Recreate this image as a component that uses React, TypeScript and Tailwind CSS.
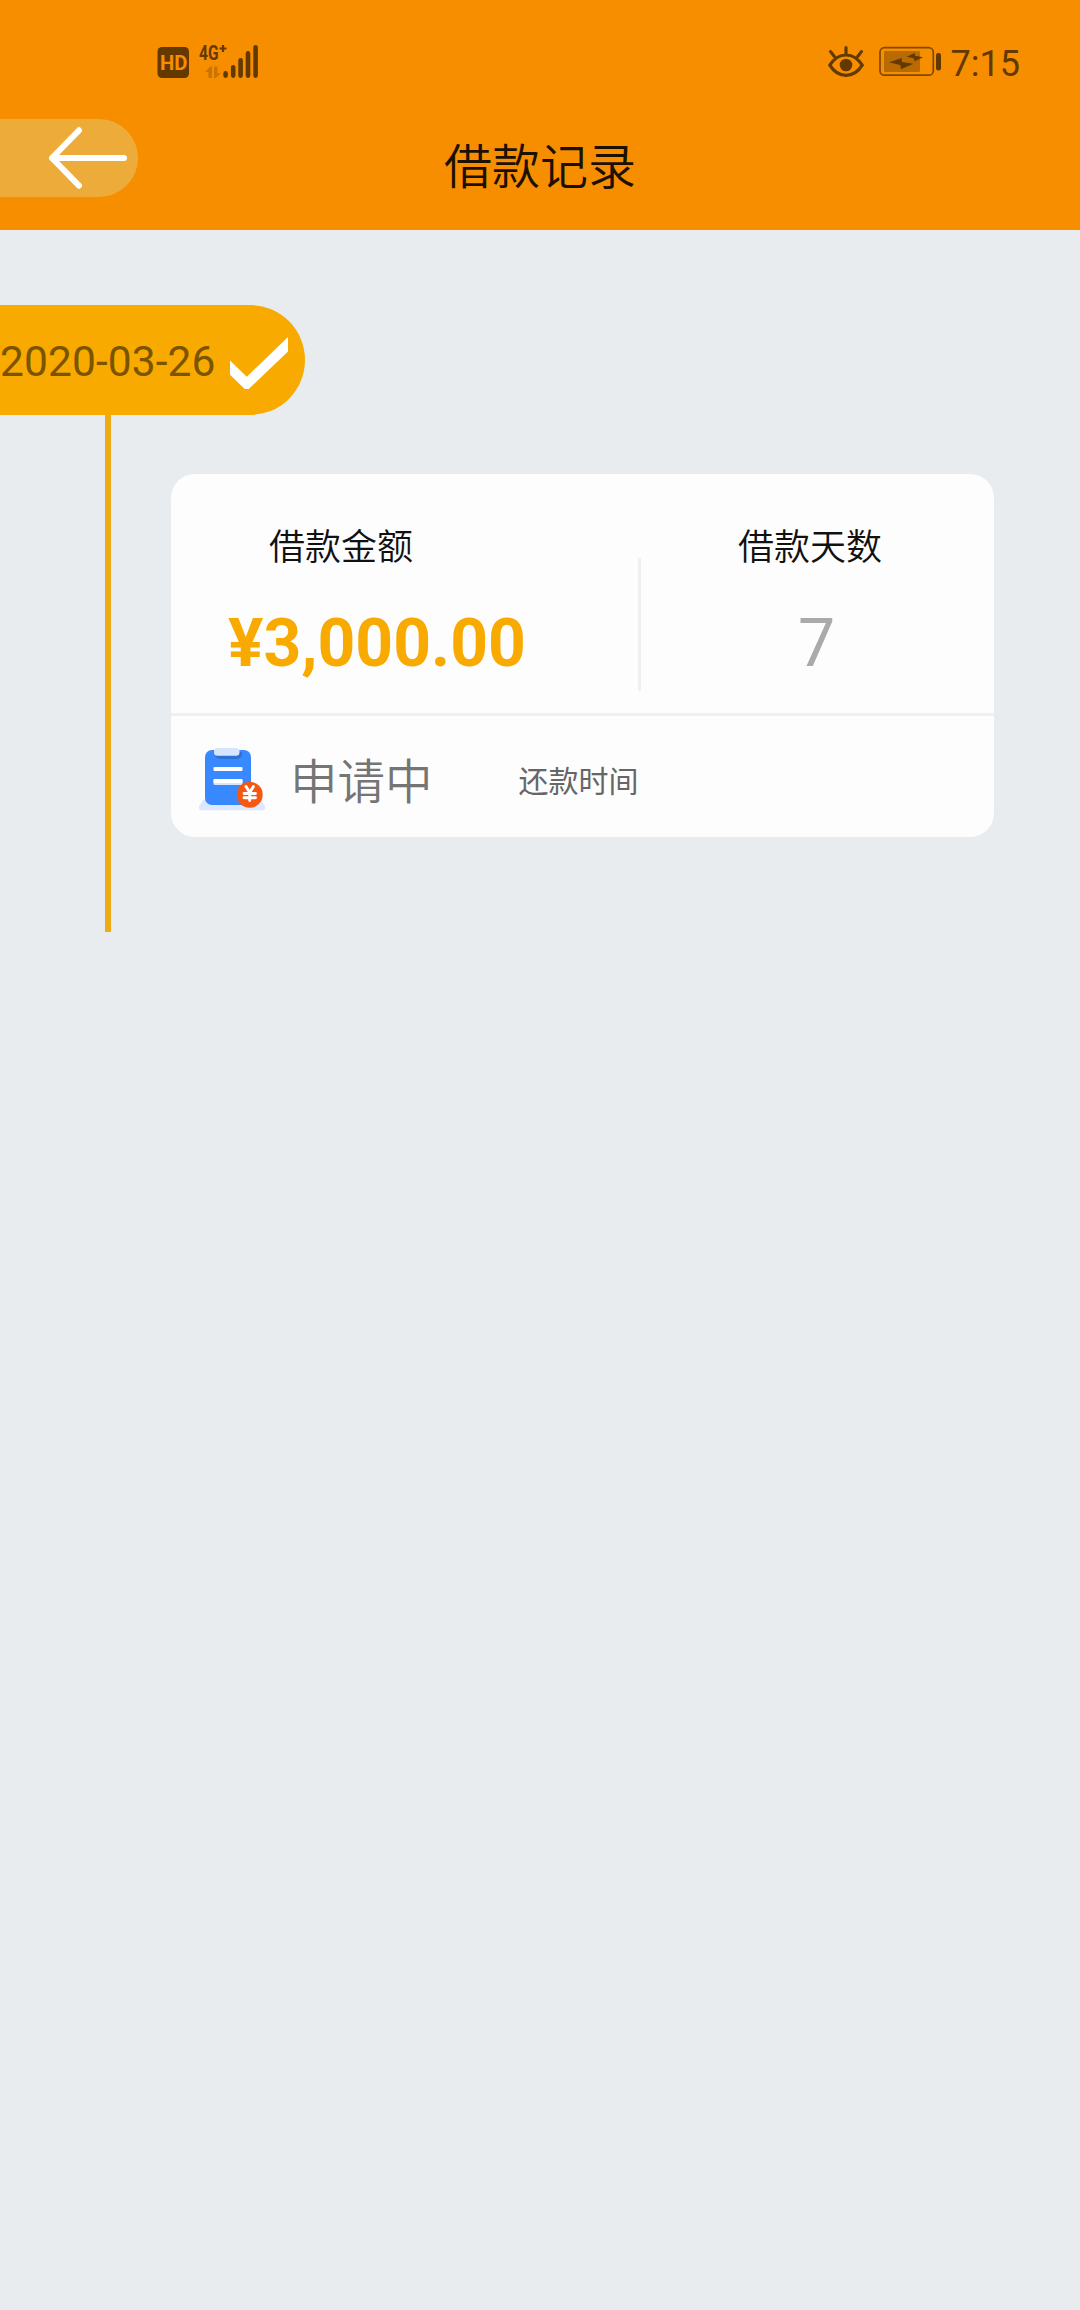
/**
 * Loan history screen: status bar, header and a timeline of loan requests.
 */

interface LoanRecord {
  date: string;
  amount: string;
  days: number;
  status: string;
}

const RECORDS: LoanRecord[] = [
  { date: '2020-03-26', amount: '¥3,000.00', days: 7, status: '申请中' },
];

function SignalIcons() {
  return (
    <svg width="110" height="40" viewBox="152 42 110 40" fill="#633900">
      <rect x="157.5" y="47" width="31.5" height="31" rx="4.5" />
      <text
        x="160"
        y="70"
        fill="#f78e00"
        className="font-['Roboto'] text-[20px] font-bold"
        textLength="27.5"
        lengthAdjust="spacingAndGlyphs"
      >
        HD
      </text>
      <text
        x="199"
        y="59.5"
        className="font-['Roboto'] text-[20.5px] font-bold"
        textLength="19.5"
        lengthAdjust="spacingAndGlyphs"
      >
        4G
      </text>
      <path d="M219.5 48.5h7M223 45v7" stroke="#633900" strokeWidth="2.2" />
      {/* data up / down arrows */}
      <g fill="#c97400">
        <path d="M205 72l5.3-5.5h1.7V78h-3.6v-6z" />
        <path d="M214 66.500h3.400V73h3.600l-5.400 5H214z" />
      </g>
      <path
        d="M225.6 73.4v2.2M233.2 67.2v8.4M240.6 60.2v15.4M248 53.2v22.4M255.6 47.2v28.4"
        stroke="#633900"
        strokeWidth="4.6"
        strokeLinecap="round"
      />
    </svg>
  );
}

function EyeIcon() {
  return (
    <svg width="38" height="34" viewBox="827 45 38 34" fill="none" stroke="#633900" strokeWidth="3.2" strokeLinecap="round">
      <path d="M829.8 65.2C834 58.6 839.6 55 846 55s12 3.6 16.2 10.2C858 72 852.4 75.4 846 75.4s-12-3.4-16.2-10.2z" />
      <path d="M846 47.7v6M830.600 51.6l3.8 5M861.400 51.6l-3.8 5" />
      <circle cx="846" cy="65" r="6.3" fill="#633900" stroke="none" />
    </svg>
  );
}

function BatteryIcon() {
  return (
    <svg width="64" height="34" viewBox="878 45 64 34" fill="#633900">
      <rect x="880" y="47.7" width="53.3" height="27.5" rx="4.5" fill="none" stroke="#7f4900" strokeWidth="1.7" />
      <rect x="884" y="51" width="36" height="21" rx="1" fill="#b96a00" />
      <rect x="936" y="53" width="5" height="17.5" rx="2.2" />
      <path d="M889 62.3l12.700-4.300.3 4 11.300 1.700-12.300 5.600-.7-4.300z" />
      <path d="M906.700 56.700l8-3.700.3 2.700 8 1.600-8.300 4-1-3z" />
    </svg>
  );
}

function BackArrow() {
  return (
    <svg width="80" height="64" viewBox="48 126 80 64" fill="none" stroke="#fff" strokeWidth="6" strokeLinecap="round" strokeLinejoin="round">
      <path d="M79 130.300L52 158l27 27.700M52 158h72" />
    </svg>
  );
}

function CheckMark() {
  return (
    <svg width="58" height="52" viewBox="230 337 58 52" fill="#fff">
      <path d="M230 360.500l16.800 16.200L288 337v14.500L248.800 389h-4L230 374.700z" />
    </svg>
  );
}

function ClipboardIcon() {
  return (
    <svg width="66" height="64" viewBox="199 747 66 64">
      <path d="M204 799h56l4.500 6.500c1.500 2.500.5 4.800-2.500 4.800h-60c-3 0-3.800-2.300-2.500-4.800z" fill="#dbe8fd" />
      <rect x="205" y="750" width="46" height="55" rx="7" fill="#3888ff" />
      <path d="M215 752h27v2a5 5 0 0 1-5 5h-17a5 5 0 0 1-5-5z" fill="#2f6fd6" />
      <rect x="214" y="748" width="25.500" height="7.700" rx="3.500" fill="#d5e5fd" />
      <rect x="213.500" y="767" width="29" height="4" rx="1" fill="#fff" />
      <rect x="213.500" y="779" width="29" height="6" rx="1.500" fill="#d5e5fd" />
      <rect x="213.500" y="779" width="29" height="4" rx="1" fill="#fff" />
      <circle cx="249.700" cy="794.800" r="13" fill="#f65812" />
      <path
        d="M246 786.500l3.700 6 3.700-6M244 793.500h11.500M244 797.800h11.500M249.700 793v7.500"
        fill="none"
        stroke="#fff"
        strokeWidth="2.900"
        strokeLinecap="round"
      />
    </svg>
  );
}

function Header() {
  return (
    <header className="h-[230px] bg-[#f78e00]">
      <div className="flex h-[119px] items-start justify-between pt-[42px] pr-[60px] pl-[152px]">
        <SignalIcons />
        <div className="flex items-start pt-[3px] font-['Roboto'] text-[36px] leading-[38px] text-[#633900]">
          <EyeIcon />
          <span className="ml-[13px]">
            <BatteryIcon />
          </span>
          <span className="ml-[9px]">7:15</span>
        </div>
      </div>
      <div className="grid grid-cols-[138px_1fr_138px]">
        <button className="flex h-[78px] items-center rounded-r-full bg-[#edac3a] pl-12" aria-label="返回">
          <BackArrow />
        </button>
        <h1 className="pt-2 text-center text-[48px] leading-[72px] font-[350] text-[#1c1000]">借款记录</h1>
      </div>
    </header>
  );
}

function LoanCard({ record }: { record: LoanRecord }) {
  return (
    <div className="mt-[59px] ml-[60px] h-[363px] w-[823px] rounded-3xl bg-[#fdfdfd]">
      <div className="flex h-[239px]">
        <div className="w-[467px] pt-[43px]">
          <div className="pl-[98px] text-[36px] leading-[54px] font-[350] text-[#111]">借款金额</div>
          <div className="mt-[34px] pl-[57px] font-['Roboto'] text-[66px] leading-[78px] font-bold text-[#f8aa00]">
            {record.amount}
          </div>
        </div>
        <div className="mt-[84px] h-[133px] w-[3px] bg-[#f0f0f0]" />
        <div className="flex-1 pt-[43px]">
          <div className="pl-[97px] text-[36px] leading-[54px] font-[350] text-[#111]">借款天数</div>
          <div className="mt-[34px] pl-[157px] font-['Roboto'] text-[66px] leading-[78px] text-[#aaa]">
            {record.days}
          </div>
        </div>
      </div>
      <div className="flex h-[124px] items-center border-t-[3px] border-[#f0f0f0] pt-1">
        <span className="ml-[28px] pt-px">
          <ClipboardIcon />
        </span>
        <span className="ml-[25px] text-[47.5px] leading-[72px] font-[350] text-[#757575]">{record.status}</span>
        <span className="ml-[86px] text-[30px] leading-[44px] text-[#666]">还款时间</span>
      </div>
    </div>
  );
}

function TimelineItem({ record }: { record: LoanRecord }) {
  return (
    <section>
      <div className="flex h-[110px] w-[305px] items-center justify-between rounded-r-full bg-[#f8aa00] pr-[17px]">
        <span className="pt-[3px] font-['Roboto'] text-[42.5px] leading-[50px] tracking-[0.1px] text-[#7b5400]">
          {record.date}
        </span>
        <span className="pt-[5px]">
          <CheckMark />
        </span>
      </div>
      <div className="ml-[105px] h-[517px] border-l-6 border-[#f0aa14]">
        <div className="flow-root">
          <LoanCard record={record} />
        </div>
      </div>
    </section>
  );
}

export default function App() {
  return (
    <div className="min-h-[2310px] w-[1080px] bg-[#e8ecef] font-['Noto_Sans_CJK_SC',sans-serif]">
      <Header />
      <main className="pt-[75px]">
        {RECORDS.map((record) => (
          <TimelineItem key={record.date} record={record} />
        ))}
      </main>
    </div>
  );
}
